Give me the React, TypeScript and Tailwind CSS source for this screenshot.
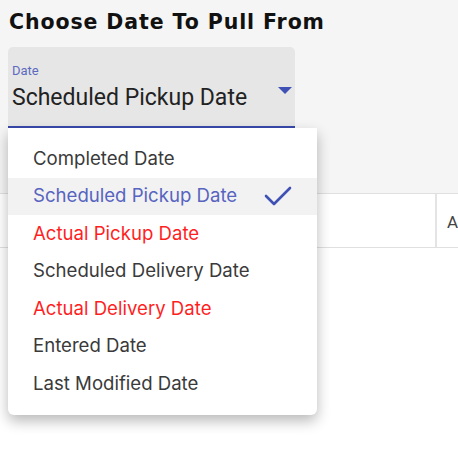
const options = [
  { label: 'Completed Date', tone: 'normal' },
  { label: 'Scheduled Pickup Date', tone: 'selected' },
  { label: 'Actual Pickup Date', tone: 'red' },
  { label: 'Scheduled Delivery Date', tone: 'normal' },
  { label: 'Actual Delivery Date', tone: 'red' },
  { label: 'Entered Date', tone: 'normal' },
  { label: 'Last Modified Date', tone: 'normal' },
];

export default function App() {
  return (
    <div className="relative w-[458px] h-[453px] overflow-hidden bg-white" style={{ fontFamily: 'Roboto, "Liberation Sans", sans-serif' }}>
      {/* Top area */}
      <div className="h-[193px] bg-[#f5f5f5] pt-[8px] pl-[8px]">
        <h1 className="pl-[1px] text-[20.5px] leading-[28px] font-bold text-[#111] tracking-[0.9px]" style={{ fontFamily: '"DejaVu Sans", Verdana, sans-serif' }}>
          Choose Date To Pull From
        </h1>
        <div className="mt-[11px] w-[287px] h-[81px] rounded-t-[5px] bg-[#e6e6e6] border-b-2 border-[#3949ab] relative pl-[4px] pt-[16px]">
          <div className="text-[13px] leading-[15px] text-[#5c6bc0]">Date</div>
          <div className="mt-[6px] text-[23px] leading-[28px] text-[#222]">Scheduled Pickup Date</div>
          <svg className="absolute right-[3px] top-[40px]" width="14" height="7" viewBox="0 0 14 7">
            <path d="M0 0 L14 0 L7 7 Z" fill="#3f51b5" />
          </svg>
        </div>
      </div>

      {/* Table header row */}
      <div className="flex h-[55px] border-y border-[#e0e0e0] bg-white">
        <div className="w-[441px] border-r-2 border-[#e4e4e4]" />
        <div className="flex-1 pl-[10px] pt-[16px] text-[17px] text-[#444]">A</div>
      </div>

      {/* Dropdown menu */}
      <div
        className="absolute left-[8px] top-[128px] w-[309px] h-[287px] bg-white rounded-b-[6px] shadow-[0_6px_14px_rgba(0,0,0,0.28)] py-[12px]"
        style={{ fontFamily: 'Inter, Roboto, sans-serif' }}
      >
        {options.map(o => (
          <div
            key={o.label}
            className={`flex items-center justify-between h-[37.5px] pl-[25px] pr-[25px] text-[18.6px] ${
              o.tone === 'selected' ? 'bg-[#f2f2f2] text-[#5764c0]' : o.tone === 'red' ? 'text-[#ff1f1f]' : 'text-[#3a3a3a]'
            }`}
          >
            <span>{o.label}</span>
            {o.tone === 'selected' && (
              <svg width="28" height="20" viewBox="0 0 28 20" fill="none">
                <path d="M2 10 L10 18 L26 2" stroke="#3f51b5" strokeWidth="2.6" strokeLinecap="round" strokeLinejoin="round" />
              </svg>
            )}
          </div>
        ))}
      </div>
    </div>
  );
}
